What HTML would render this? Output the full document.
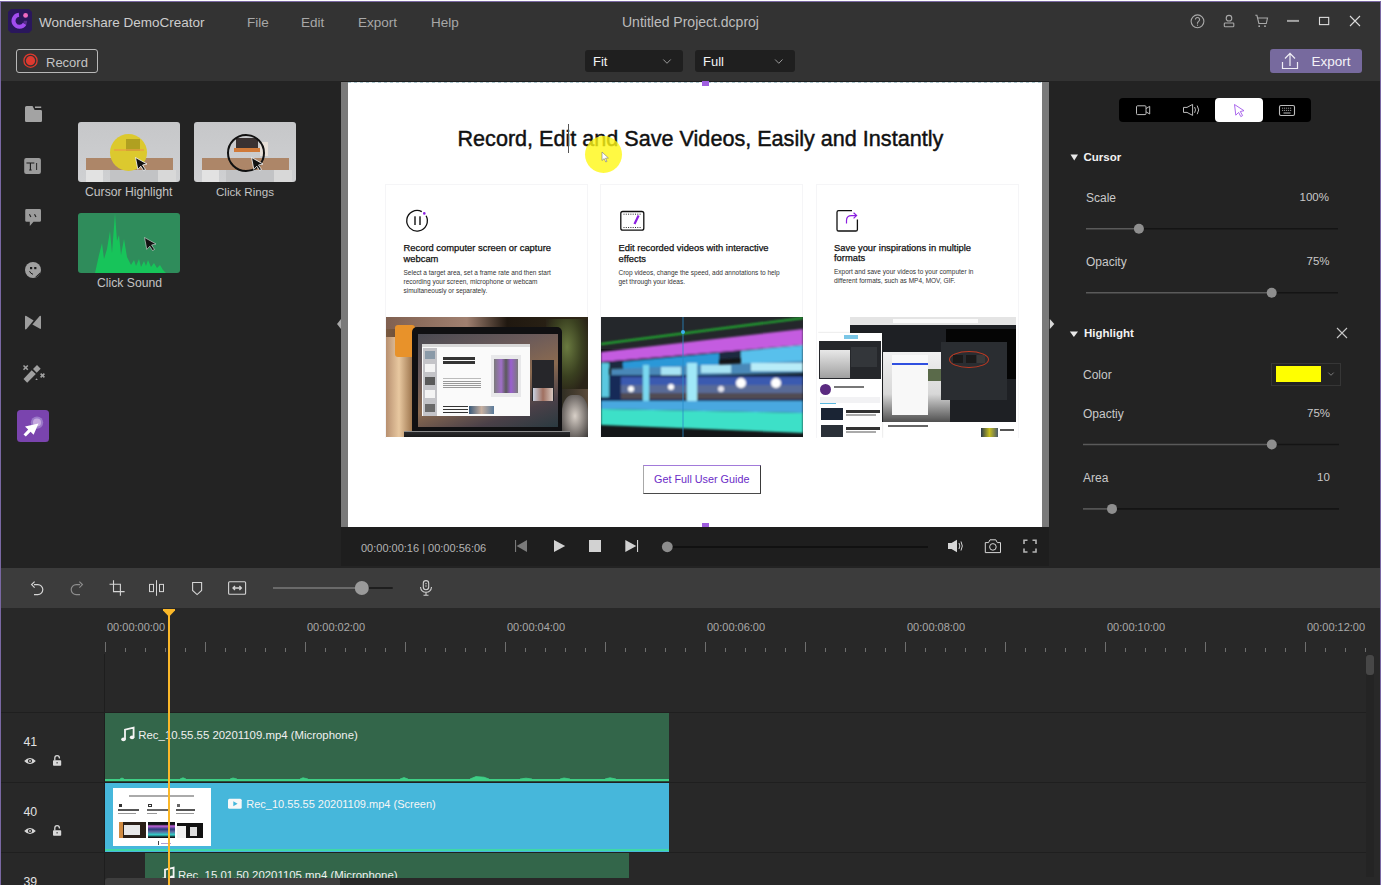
<!DOCTYPE html>
<html><head><meta charset="utf-8">
<style>
*{box-sizing:border-box;margin:0;padding:0}
html,body{width:1381px;height:885px;overflow:hidden;background:#fff;font-family:"Liberation Sans",sans-serif}
.a{position:absolute}
.t{position:absolute;white-space:pre;line-height:1}
svg{position:absolute;overflow:visible}
</style></head><body>
<!-- window frame -->
<div class="a" style="left:0;top:1px;width:1381px;height:884px;background:#7a68a3"></div>
<!-- title + toolbar -->
<div class="a" id="top" style="left:1px;top:2px;width:1379px;height:79px;background:#333333"></div>
<!-- TOPBAR CONTENT -->
<svg style="left:8px;top:9px" width="24" height="24" viewBox="0 0 24 24">
 <path d="M3 0 H21 L24 3 V21 L21 24 H3 L0 21 V3 Z" fill="#2a175c"/>
 <path d="M10.98 5.82 A6 6 0 1 0 16.7 14.8" fill="none" stroke="#a24cf0" stroke-width="4"/>
 <path d="M16.7 14.8 A6 6 0 0 0 17.5 11.8" fill="none" stroke="#5a2e90" stroke-width="3.4"/>
 <circle cx="17.6" cy="6.4" r="2.4" fill="#f06ac0"/>
</svg>
<div class="t" style="left:39px;top:15.6px;font-size:13.5px;color:#cdcdcd">Wondershare DemoCreator</div>
<div class="t" style="left:247px;top:15.6px;font-size:13.5px;color:#a8a8a8">File</div>
<div class="t" style="left:301px;top:15.6px;font-size:13.5px;color:#a8a8a8">Edit</div>
<div class="t" style="left:358px;top:15.6px;font-size:13.5px;color:#a8a8a8">Export</div>
<div class="t" style="left:431px;top:15.6px;font-size:13.5px;color:#a8a8a8">Help</div>
<div class="t" style="left:622px;top:15.4px;font-size:14px;color:#bdbdbd">Untitled Project.dcproj</div>
<svg style="left:1185px;top:8px" width="190" height="28" viewBox="1185 8 190 28">
 <circle cx="1197.5" cy="21.3" r="6.4" fill="none" stroke="#a9a9a9" stroke-width="1.1"/>
 <path d="M1195.4 19.6 a2.1 2.1 0 1 1 3.2 1.8 q-1.1 0.6 -1.1 1.7 v0.6" fill="none" stroke="#a9a9a9" stroke-width="1.1"/>
 <circle cx="1197.5" cy="25.2" r="0.6" fill="#a9a9a9"/>
 <circle cx="1229" cy="18.2" r="2.8" fill="none" stroke="#a9a9a9" stroke-width="1.1"/>
 <rect x="1224.3" y="23" width="9.5" height="3.8" rx="0.8" fill="none" stroke="#a9a9a9" stroke-width="1.1"/>
 <path d="M1255.3 15.3 h1.6 l2 8.2 h7.4 l1.2 -5.5 h-9.5" fill="none" stroke="#a9a9a9" stroke-width="1.1"/>
 <rect x="1258.4" y="25.4" width="1.6" height="1.6" fill="#a9a9a9"/>
 <rect x="1264.2" y="25.4" width="1.6" height="1.6" fill="#a9a9a9"/>
 <rect x="1287" y="19.9" width="12" height="2" fill="#a3a3a3"/>
 <rect x="1319.5" y="17.4" width="9.2" height="7.2" fill="none" stroke="#dcdcdc" stroke-width="1.1"/>
 <path d="M1350 16 L1360 26 M1360 16 L1350 26" stroke="#dcdcdc" stroke-width="1.1"/>
</svg>
<!-- record btn -->
<div class="a" style="left:16px;top:49px;width:82px;height:24px;border:1px solid #b8b8b8;border-radius:3px"></div>
<svg style="left:20px;top:50px" width="22" height="22" viewBox="20 50 22 22">
 <circle cx="30.5" cy="60.7" r="6.6" fill="none" stroke="#e0392d" stroke-width="1.3"/>
 <circle cx="30.5" cy="60.7" r="4.6" fill="#dd3a30"/>
</svg>
<div class="t" style="left:46px;top:55.8px;font-size:13px;color:#c4c4c4">Record</div>
<!-- dropdowns -->
<div class="a" style="left:585px;top:50px;width:98px;height:22px;background:#1f1f1f;border-radius:3px"></div>
<div class="t" style="left:593px;top:55px;font-size:13px;color:#f2f2f2">Fit</div>
<svg style="left:660px;top:55px" width="14" height="12" viewBox="660 55 14 12"><path d="M663.3 59.5 L667 63.3 L670.7 59.5" fill="none" stroke="#9a9a9a" stroke-width="1"/></svg>
<div class="a" style="left:695px;top:50px;width:100px;height:22px;background:#1f1f1f;border-radius:3px"></div>
<div class="t" style="left:703px;top:55px;font-size:13px;color:#f2f2f2">Full</div>
<svg style="left:772px;top:55px" width="14" height="12" viewBox="772 55 14 12"><path d="M775.1 59.5 L778.8 63.3 L782.5 59.5" fill="none" stroke="#9a9a9a" stroke-width="1"/></svg>
<!-- export btn -->
<div class="a" style="left:1270px;top:49px;width:92px;height:24px;background:#776a9e;border-radius:3px"></div>
<svg style="left:1278px;top:50px" width="24" height="22" viewBox="1278 50 24 22">
 <path d="M1282.5 62 V68.5 H1297.5 V62" fill="none" stroke="#f0eef5" stroke-width="1.2"/>
 <path d="M1290 53.5 V66 M1285 58.5 L1290 53.3 L1295 58.5" fill="none" stroke="#f0eef5" stroke-width="1.2"/>
</svg>
<div class="t" style="left:1311.5px;top:55.4px;font-size:13.5px;color:#f4f2f8">Export</div>
<!-- left panel -->
<div class="a" id="left" style="left:1px;top:81px;width:340px;height:487px;background:#232323"></div>
<!-- LEFT CONTENT -->
<svg style="left:1px;top:81px" width="340" height="487" viewBox="1 81 340 487">
 <!-- folder -->
 <path d="M26.5 106 H32.5 L34.6 110 H40.8 Q42 110 42 111.2 V120.8 Q42 122 40.8 122 H26.2 Q25 122 25 120.8 V107.5 Q25 106 26.5 106 Z" fill="#a3a3a3"/>
 <rect x="35" y="106.5" width="6.2" height="1.5" fill="#a3a3a3"/>
 <!-- TI -->
 <rect x="24.2" y="158" width="16.7" height="16" rx="2" fill="#9b9b9b"/>
 <path d="M27 163.5 V163 H33.8 V163.5 M30.4 163 V170 M29.2 170 H31.6" fill="none" stroke="#1a1a1a" stroke-width="1.1"/>
 <rect x="36.2" y="163" width="0.9" height="7" fill="#1a1a1a"/>
 <!-- chat -->
 <path d="M26.5 209 H39.6 Q41 209 41 210.4 V220.4 Q41 221.8 39.6 221.8 H33.5 L29.8 226 V221.8 H26.6 Q25.2 221.8 25.2 220.4 V210.4 Q25.2 209 26.5 209 Z" fill="#9b9b9b"/>
 <path d="M29.4 214.2 L30.9 217 M34.5 214.2 L36 217" stroke="#1e1e1e" stroke-width="1.1"/>
 <!-- emoji -->
 <circle cx="33" cy="270" r="8" fill="#a0a0a0"/>
 <path d="M34.8 277.6 L40.6 272 Q39.6 276.4 34.8 277.6 Z" fill="#1a1a1a"/>
 <rect x="30" y="267" width="2.2" height="2.2" fill="#1a1a1a"/>
 <rect x="34.2" y="267" width="2.2" height="2.2" fill="#1a1a1a"/>
 <path d="M29.5 271.2 Q30.5 273.6 33 274.3" fill="none" stroke="#1a1a1a" stroke-width="1"/>
 <!-- transitions -->
 <path d="M25 316.5 Q25 315.3 26.3 315.9 L33.6 320.5 L26.5 329 Q25 330 25 328.5 Z" fill="#9d9d9d"/>
 <path d="M41 316.5 Q41 315.3 39.7 316 L32.4 324.4 L39.5 328.6 Q41 329.4 41 328 Z" fill="#9d9d9d"/>
 <!-- magic wand -->
 <path d="M23.5 379 L31.7 370.3 L35.8 374 L27.2 382.8 Z" fill="#a0a0a0"/>
 <path d="M33 369 L37 365 L40.7 368.8 L36.7 372.8 Z" fill="#a0a0a0"/>
 <path d="M23.5 365.5 L27.8 369.7 M27.8 365.5 L23.5 369.7" stroke="#a0a0a0" stroke-width="1.6"/>
 <path d="M40.6 373.6 L44.4 377.4 M44.4 373.6 L40.6 377.4" stroke="#a0a0a0" stroke-width="1.6"/>
 <path d="M35.3 380 L36.5 378.2 L37.8 380 Z" fill="#a0a0a0"/>
 <!-- cursor tool active -->
 <rect x="17" y="410" width="32" height="32" rx="3.5" fill="#7a44ae"/>
 <circle cx="37" cy="422.6" r="6.2" fill="#9a78c8"/>
 <circle cx="37" cy="422.6" r="4" fill="#c5a8df"/>
 <path d="M38.5 423.5 L25 426.5 L28.2 429.6 L23.5 434.5 L25.8 436.6 L30.6 431.8 L33.6 434.8 Z" fill="#ffffff"/>
</svg>
<!-- thumbs -->
<div class="a" style="left:78px;top:122px;width:102px;height:60px;border-radius:3px;overflow:hidden;background:linear-gradient(#c6c7c9,#cfd0d2)">
 <div class="a" style="left:8px;top:36px;width:87px;height:12px;background:#ad8668"></div>
 <div class="a" style="left:8px;top:48px;width:17px;height:12px;background:#e2e2e2"></div>
 <div class="a" style="left:80px;top:48px;width:18px;height:12px;background:#d8d8d8"></div>
 <div class="a" style="left:32px;top:48px;width:48px;height:12px;background:#c2c3c5"></div>
 <div class="a" style="left:32px;top:12px;width:37px;height:37px;border-radius:50%;background:#dcc92e"></div>
 <div class="a" style="left:48px;top:17px;width:14px;height:12px;background:#b0a020"></div>
 <div class="a" style="left:36px;top:27px;width:30px;height:2px;background:#e8a040;opacity:.7"></div>
 <svg style="left:57px;top:35px" width="14" height="14" viewBox="0 0 14 14"><path d="M0.5 0.5 L12 7 L7.5 8 L10.5 12.5 L8.5 13.5 L5.8 9.2 L2.8 12.4 Z" fill="#111" stroke="#fff" stroke-width="0.8"/></svg>
</div>
<div class="t" style="left:85px;top:185.5px;font-size:12.2px;color:#c4c4c4">Cursor Highlight</div>
<div class="a" style="left:194px;top:122px;width:102px;height:60px;border-radius:3px;overflow:hidden;background:linear-gradient(#c6c7c9,#cfd0d2)">
 <div class="a" style="left:8px;top:36px;width:87px;height:12px;background:#ad8668"></div>
 <div class="a" style="left:8px;top:48px;width:17px;height:12px;background:#e2e2e2"></div>
 <div class="a" style="left:80px;top:48px;width:18px;height:12px;background:#d8d8d8"></div>
 <div class="a" style="left:32px;top:48px;width:48px;height:12px;background:#c2c3c5"></div>
 <div class="a" style="left:42px;top:16px;width:22px;height:12px;background:#3a3232"></div>
 <div class="a" style="left:40px;top:26px;width:30px;height:4px;background:#d07a3a"></div>
 <div class="a" style="left:66px;top:20px;width:8px;height:14px;background:#e8e0d8"></div>
 <div class="a" style="left:33px;top:12px;width:38px;height:38px;border-radius:50%;border:2px solid #111"></div>
 <svg style="left:57px;top:35px" width="14" height="14" viewBox="0 0 14 14"><path d="M0.5 0.5 L12 7 L7.5 8 L10.5 12.5 L8.5 13.5 L5.8 9.2 L2.8 12.4 Z" fill="#111" stroke="#fff" stroke-width="0.8"/></svg>
</div>
<div class="t" style="left:216px;top:185.8px;font-size:11.6px;color:#c4c4c4">Click Rings</div>
<div class="a" style="left:78px;top:213px;width:102px;height:60px;border-radius:3px;overflow:hidden;background:#2f8c5b">
 <svg style="left:0;top:0" width="102" height="60" viewBox="0 0 102 60"><path d="M17 60 L21 42 L24 30 L26 46 L29 36 L32 18 L34 40 L37 0 L39 28 L41 22 L43 42 L46 26 L49 44 L53 52 L56 47 L58 53 L61 46 L63 54 L66 48 L68 53 L70 47 L73 54 L76 50 L79 55 L82 52 L85 57 L88 60 Z" fill="#17c45a"/></svg>
 <svg style="left:66px;top:24px" width="14" height="14" viewBox="0 0 14 14"><path d="M0.5 0.5 L12 7 L7.5 8 L10.5 12.5 L8.5 13.5 L5.8 9.2 L2.8 12.4 Z" fill="#111" stroke="#ddd" stroke-width="0.6"/></svg>
</div>
<div class="t" style="left:97px;top:276.5px;font-size:12.2px;color:#c4c4c4">Click Sound</div>
<!-- right panel -->
<div class="a" id="right" style="left:1049px;top:81px;width:331px;height:487px;background:#232323"></div>
<!-- RIGHT CONTENT -->
<div class="a" style="left:1119px;top:98px;width:192px;height:24px;background:#000;border-radius:4px"></div>
<div class="a" style="left:1215px;top:98px;width:48px;height:24px;background:#fff;border-radius:4px"></div>
<svg style="left:1119px;top:98px" width="192" height="24" viewBox="1119 98 192 24">
 <rect x="1136.5" y="105.8" width="9.5" height="8.8" rx="1" fill="none" stroke="#bdbdbd" stroke-width="1"/>
 <path d="M1146 108.6 L1149.7 106.3 V114 L1146 111.8" fill="none" stroke="#bdbdbd" stroke-width="1"/>
 <path d="M1183.5 107.4 H1187 L1192.6 104.4 V115.4 L1187 112.4 H1183.5 Z" fill="none" stroke="#bdbdbd" stroke-width="1"/>
 <path d="M1194.6 107 Q1196.4 109.9 1194.6 112.8 M1197.2 105.6 Q1200.2 109.9 1197.2 114.2" fill="none" stroke="#bdbdbd" stroke-width="1"/>
 <path d="M1234.5 104.5 L1244 110.7 L1240.3 111.5 L1242.6 115.6 L1240.8 116.6 L1238.6 112.4 L1235.8 115.2 Z" fill="none" stroke="#a158ea" stroke-width="0.9"/>
 <rect x="1279.5" y="105.5" width="15" height="10" rx="1.5" fill="none" stroke="#bdbdbd" stroke-width="1.1"/>
 <path d="M1282 108.2 H1292 M1282 110.4 H1292" stroke="#bdbdbd" stroke-width="0.8" stroke-dasharray="1.2 0.8"/>
 <path d="M1283.5 113 H1290.5" stroke="#bdbdbd" stroke-width="1"/>
</svg>
<svg style="left:1060px;top:140px" width="300" height="400" viewBox="1060 140 300 400">
 <path d="M1070.5 154.6 H1078 L1074.25 160.6 Z" fill="#e8e8e8"/>
 <path d="M1086 228.8 H1138" stroke="#5a5a5a" stroke-width="1.6"/>
 <path d="M1139 228.8 H1338" stroke="#141414" stroke-width="1.6"/>
 <circle cx="1138.9" cy="228.8" r="5" fill="#8e8e8e"/>
 <path d="M1086 292.8 H1271" stroke="#5a5a5a" stroke-width="1.6"/>
 <path d="M1272 292.8 H1338" stroke="#141414" stroke-width="1.6"/>
 <circle cx="1271.7" cy="292.8" r="5" fill="#8e8e8e"/>
 <path d="M1069.8 331.4 H1078 L1073.9 337 Z" fill="#e8e8e8"/>
 <path d="M1337 328 L1347 338 M1347 328 L1337 338" stroke="#c8c8c8" stroke-width="1.1"/>
 <path d="M1083 444.5 H1271" stroke="#5a5a5a" stroke-width="1.6"/>
 <path d="M1272 444.5 H1339" stroke="#141414" stroke-width="1.6"/>
 <circle cx="1271.8" cy="444.5" r="5" fill="#8e8e8e"/>
 <path d="M1083 508.9 H1111" stroke="#5a5a5a" stroke-width="1.6"/>
 <path d="M1112 508.9 H1339" stroke="#141414" stroke-width="1.6"/>
 <circle cx="1112" cy="508.9" r="5" fill="#8e8e8e"/>
</svg>
<div class="t" style="left:1083.5px;top:151.6px;font-size:11.5px;font-weight:700;color:#f2f2f2">Cursor</div>
<div class="t" style="left:1086px;top:192.3px;font-size:12px;color:#c9c9c9">Scale</div>
<div class="t" style="left:1299.5px;top:192.3px;font-size:11.5px;color:#c9c9c9">100%</div>
<div class="t" style="left:1086px;top:256.3px;font-size:12px;color:#c9c9c9">Opacity</div>
<div class="t" style="left:1306.5px;top:256.3px;font-size:11.5px;color:#c9c9c9">75%</div>
<div class="t" style="left:1084px;top:328.3px;font-size:11.5px;font-weight:700;color:#f2f2f2">Highlight</div>
<div class="t" style="left:1083px;top:369.4px;font-size:12px;color:#c9c9c9">Color</div>
<div class="a" style="left:1271px;top:362.5px;width:69.5px;height:23px;border:1px solid #363636;background:#232323"></div>
<div class="a" style="left:1275.7px;top:365.8px;width:45.3px;height:16px;background:#ffff00"></div>
<svg style="left:1325px;top:370px" width="12" height="8" viewBox="1325 370 12 8"><path d="M1328.3 372.6 L1331 375.3 L1333.7 372.6" fill="none" stroke="#7a7a7a" stroke-width="1"/></svg>
<div class="t" style="left:1083px;top:408.1px;font-size:12px;color:#c9c9c9">Opactiy</div>
<div class="t" style="left:1307px;top:408.1px;font-size:11.5px;color:#c9c9c9">75%</div>
<div class="t" style="left:1083px;top:472.2px;font-size:12px;color:#c9c9c9">Area</div>
<div class="t" style="left:1317px;top:472.2px;font-size:11.5px;color:#c9c9c9">10</div>
<!-- preview -->
<div class="a" id="prev" style="left:341px;top:81px;width:708px;height:446px;background:#7a7a7a"></div>
<div class="a" style="left:348px;top:83px;width:694px;height:444px;background:#ffffff"></div>
<!-- PREVIEW CONTENT -->
<div class="a" style="left:341px;top:81px;width:708px;height:1px;background:#1c1c1c"></div>
<div class="a" style="left:348px;top:82px;width:694px;height:1px;background:repeating-linear-gradient(90deg,#aac4cc 0 3px,#e8eef0 3px 6px)"></div>
<div class="a" style="left:702px;top:81px;width:7px;height:5px;background:#a05ee0"></div>
<div class="a" style="left:702px;top:523px;width:7px;height:4px;background:#a05ee0"></div>
<div class="t" style="left:457.5px;top:128.3px;font-size:21.6px;color:#111;-webkit-text-stroke:0.45px #111">Record, Edit and Save Videos, Easily and Instantly</div>
<div class="a" style="left:568px;top:124px;width:1px;height:29px;background:#555"></div>
<div class="a" style="left:585px;top:135.5px;width:37px;height:37px;border-radius:50%;background:rgba(255,248,20,0.8)"></div>
<svg style="left:601px;top:151px" width="10" height="12" viewBox="0 0 10 12"><path d="M1 1 L1 9.5 L3.2 7.6 L4.8 11 L6 10.4 L4.5 7.2 L7.4 7 Z" fill="#fff" stroke="#777" stroke-width="0.6"/></svg>
<!-- cards -->
<div class="a" style="left:385px;top:184px;width:203px;height:254px;border:1px solid #f5f5f7;border-bottom:none"></div>
<div class="a" style="left:600px;top:184px;width:203px;height:254px;border:1px solid #f5f5f7;border-bottom:none"></div>
<div class="a" style="left:816px;top:184px;width:203px;height:254px;border:1px solid #f5f5f7;border-bottom:none"></div>
<svg style="left:400px;top:205px" width="40" height="30" viewBox="400 205 40 30">
 <path d="M421.8 211.6 A10.3 10.3 0 1 0 426.1 215.8" fill="none" stroke="#111" stroke-width="1.3"/>
 <circle cx="424.3" cy="213.4" r="1.3" fill="#8a1ee0"/>
 <rect x="414.3" y="216.3" width="1.4" height="8.7" fill="#111"/>
 <rect x="419.3" y="216.3" width="1.4" height="8.7" fill="#111"/>
</svg>
<svg style="left:615px;top:205px" width="40" height="30" viewBox="615 205 40 30">
 <rect x="620.8" y="211.5" width="23" height="18.7" rx="2" fill="none" stroke="#111" stroke-width="1.3"/>
 <path d="M623.5 214.2 H641 M623.5 227.5 H641" stroke="#111" stroke-width="0.9" stroke-dasharray="1 1.3"/>
 <path d="M634.5 224 L638.6 215.5" stroke="#8a1ee0" stroke-width="2.2"/>
</svg>
<svg style="left:830px;top:205px" width="40" height="30" viewBox="830 205 40 30">
 <path d="M852 210.6 H838.6 Q837 210.6 837 212.2 V229.4 Q837 231 838.6 231 H855.8 Q857.4 231 857.4 229.4 V219.5" fill="none" stroke="#111" stroke-width="1.3"/>
 <path d="M846.5 223.5 V220.5 Q846.5 215.6 851.5 215.6 H856.5 M853.6 212.8 L856.6 215.6 L853.6 218.4" fill="none" stroke="#8a1ee0" stroke-width="1.2"/>
</svg>
<div class="t" style="left:403.5px;top:243px;font-size:9.4px;color:#111;-webkit-text-stroke:0.25px #111;line-height:10.5px">Record computer screen or capture
webcam</div>
<div class="t" style="left:403.5px;top:267.5px;font-size:6.5px;color:#333;line-height:9.3px">Select a target area, set a frame rate and then start
recording your screen, microphone or webcam
simultaneously or separately.</div>
<div class="t" style="left:618.5px;top:243.3px;font-size:9.4px;color:#111;-webkit-text-stroke:0.25px #111;line-height:10.5px">Edit recorded videos with interactive
effects</div>
<div class="t" style="left:618.5px;top:267.5px;font-size:6.5px;color:#333;line-height:9.3px">Crop videos, change the speed, add annotations to help
get through your ideas.</div>
<div class="t" style="left:834px;top:242.5px;font-size:9.4px;color:#111;-webkit-text-stroke:0.25px #111;line-height:10.5px">Save your inspirations in multiple
formats</div>
<div class="t" style="left:834px;top:267.2px;font-size:6.5px;color:#333;line-height:9.3px">Export and save your videos to your computer in
different formats, such as MP4, MOV, GIF.</div>
<!-- image 1 laptop -->
<div class="a" style="left:386px;top:317px;width:202px;height:120px;overflow:hidden;background:linear-gradient(90deg,#7a5a40 0%,#4a3428 20%,#3a2c24 60%,#2a2a20 85%,#5a4a3a 100%)">
 <div class="a" style="left:0;top:0;width:202px;height:12px;background:linear-gradient(90deg,#806050,#a08070 40%,#201810 60%,#302818)"></div>
 <div class="a" style="left:0;top:20px;width:26px;height:100px;background:linear-gradient(90deg,#b89070,#e8c8a0 50%,#a07850)"></div>
 <div class="a" style="left:9px;top:8px;width:20px;height:32px;background:#e8922a;border-radius:3px"></div>
 <div class="a" style="left:160px;top:2px;width:42px;height:70px;background:radial-gradient(ellipse at 50% 40%,#6a7a40,#3a4020 50%,#2a2418 80%)"></div>
 <div class="a" style="left:176px;top:78px;width:26px;height:42px;border-radius:40% 40% 0 0;background:radial-gradient(ellipse at 50% 50%,#d8d0c8,#7a7470 60%,#3a3836)"></div>
 <div class="a" style="left:26px;top:10px;width:150px;height:105px;border-radius:5px 5px 0 0;background:#101012"></div>
 <div class="a" style="left:32px;top:17px;width:140px;height:93px;background:linear-gradient(160deg,#4a4a52 0%,#6a5a5a 30%,#8a6a50 55%,#4a4048 80%,#2a3a40 100%)"></div>
 <div class="a" style="left:36px;top:27px;width:108px;height:72px;background:#fafafa"></div>
 <div class="a" style="left:36px;top:27px;width:108px;height:3px;background:#d8d8d8"></div>
 <div class="a" style="left:37px;top:31px;width:14px;height:68px;background:#c4c4c8"></div>
 <div class="a" style="left:39px;top:34px;width:10px;height:8px;background:#8a9aa8"></div>
 <div class="a" style="left:39px;top:47px;width:10px;height:8px;background:#f4f4f4"></div>
 <div class="a" style="left:39px;top:60px;width:10px;height:8px;background:#5a5a5a"></div>
 <div class="a" style="left:39px;top:73px;width:10px;height:8px;background:#f4f4f4"></div>
 <div class="a" style="left:39px;top:87px;width:10px;height:8px;background:#6a6a6a"></div>
 <div class="a" style="left:57px;top:40px;width:32px;height:2.5px;background:#333"></div>
 <div class="a" style="left:57px;top:44px;width:32px;height:2.5px;background:#333"></div>
 <div class="a" style="left:57px;top:61px;width:38px;height:1px;background:#bbb"></div>
 <div class="a" style="left:57px;top:64px;width:38px;height:8px;background:repeating-linear-gradient(#999 0 1px,#fafafa 1px 2px)"></div>
 <div class="a" style="left:57px;top:89px;width:25px;height:7px;background:repeating-linear-gradient(#333 0 1.5px,#fafafa 1.5px 3px)"></div>
 <div class="a" style="left:105px;top:38px;width:30px;height:42px;background:#e8e8ea"></div>
 <div class="a" style="left:108px;top:42px;width:24px;height:34px;background:linear-gradient(90deg,#7a7a7a,#a070c8 30%,#5a5a5a 50%,#9a60d0 70%,#7a7a7a)"></div>
 <div class="a" style="left:83px;top:89px;width:25px;height:8px;background:linear-gradient(90deg,#3a5a7a,#c8b0a0,#5a7a9a)"></div>
 <div class="a" style="left:146px;top:43px;width:22px;height:41px;background:#26262a"></div>
 <div class="a" style="left:147px;top:71px;width:20px;height:13px;background:linear-gradient(90deg,#c8d0e0,#a07060 50%,#d8c8c0)"></div>
 <div class="a" style="left:18px;top:114px;width:166px;height:6px;background:linear-gradient(#2a2a2c,#1a1a1a);border-top:1px solid #8a8a8a"></div>
</div>
<!-- image 2 timeline -->
<div class="a" style="left:601px;top:317px;width:202px;height:120px;overflow:hidden;background:#141618">
 <svg style="left:0;top:0" width="202" height="120" viewBox="0 0 202 120">
  <defs><filter id="bl" x="-5%" y="-5%" width="110%" height="110%"><feGaussianBlur stdDeviation="1.2"/></filter></defs>
  <rect width="202" height="32" fill="#24272b"/>
  <g filter="url(#bl)">
  <path d="M0 27 L202 1" stroke="#20b830" stroke-width="1.8"/>
  <path d="M0 35 L202 12 L202 28 L0 45 Z" fill="#c45ce0"/>
  <path d="M0 45 L202 28 L202 36 L0 52 Z" fill="#1a2a40"/>
  <path d="M22 45 L118 36 L118 50 L22 56 Z" fill="#2a98d8"/>
  <path d="M140 34 L202 28 L202 46 L140 50 Z" fill="#58c0ec"/>
  <path d="M10 52 L202 44 L202 56 L10 60 Z" fill="#4a88b8"/><rect x="60" y="50" width="20" height="8" fill="#a8e4f4"/><rect x="100" y="48" width="30" height="8" fill="#a8e4f4"/><rect x="150" y="46" width="52" height="8" fill="#b8ecf8"/>
  <rect x="0" y="58" width="202" height="26" fill="#182a58"/>
  <rect x="20" y="60" width="182" height="8" fill="#3a5ab0"/>
  <rect x="20" y="68" width="182" height="8" fill="#6a7aa8" opacity="0.8"/><circle cx="30" cy="72" r="3" fill="#fff"/><circle cx="70" cy="70" r="3" fill="#fff"/><circle cx="140" cy="66" r="5" fill="#fff"/><circle cx="175" cy="66" r="5" fill="#fff"/><circle cx="120" cy="72" r="3" fill="#e8e8f0"/>
  <rect x="20" y="76" width="182" height="6" fill="#6a5a50" opacity="0.7"/>
  <rect x="0" y="46" width="8" height="34" fill="#5ac8e0"/>
  <rect x="42" y="48" width="6" height="36" fill="#7ad8f0"/>
  <rect x="86" y="46" width="10" height="38" fill="#a0e8f8"/>
  
  <path d="M0 84 L202 84 L202 96 L0 92 Z" fill="#4aa8e0"/>
  <path d="M0 92 L202 96 L202 116 L0 108 Z" fill="#3ee0c8"/>
  </g>
  <path d="M82 0 V120" stroke="#2a8ac8" stroke-width="0.8"/>
  <circle cx="82" cy="15" r="2" fill="#3ab0f0"/>
 </svg>
</div>
<!-- image 3 screenshot -->
<div class="a" style="left:818px;top:317px;width:199px;height:121px;overflow:hidden;background:#ffffff">
 <div class="a" style="left:32px;top:0;width:166px;height:8px;background:#e4e4e4"></div>
 <div class="a" style="left:75px;top:2px;width:85px;height:4px;background:#fafafa"></div>
 <div class="a" style="left:32px;top:8px;width:166px;height:97px;background:#1e2024"></div>
 <div class="a" style="left:65px;top:35px;width:67px;height:70px;background:linear-gradient(#f0f0f0,#d8d8d8 60%,#505050)"></div>
 <div class="a" style="left:74px;top:38px;width:36px;height:60px;background:#f8f8f8"></div>
 <div class="a" style="left:74px;top:46px;width:36px;height:1.5px;background:#3050e0"></div>
 <div class="a" style="left:110px;top:52px;width:14px;height:12px;background:#5a6a4a"></div>
 <div class="a" style="left:128px;top:12px;width:70px;height:50px;background:#050505"></div>
 <div class="a" style="left:123px;top:25px;width:66px;height:58px;background:#2a2d31"></div>
 <div class="a" style="left:131px;top:34px;width:40px;height:17px;border:1px solid #c03a22;border-radius:50%"></div><div class="a" style="left:135px;top:38px;width:10px;height:8px;background:#1a1a1a"></div><div class="a" style="left:148px;top:38px;width:10px;height:8px;background:#1a1a1a"></div><div class="a" style="left:159px;top:38px;width:8px;height:8px;background:#3a3a3a"></div>
 <div class="a" style="left:0px;top:16px;width:64px;height:105px;background:#fff;box-shadow:0 0 2px rgba(0,0,0,0.2)"></div>
 <div class="a" style="left:26px;top:18px;width:14px;height:4px;background:#5ab8e0;opacity:.8"></div>
 <div class="a" style="left:1px;top:24px;width:62px;height:38px;background:#25272b"></div>
 <div class="a" style="left:2px;top:33px;width:30px;height:28px;background:linear-gradient(#e8e8e8,#a0a0a0)"></div>
 <div class="a" style="left:33px;top:30px;width:26px;height:20px;background:#33363a"></div>
 <div class="a" style="left:2px;top:67px;width:11px;height:11px;border-radius:50%;background:#5a2a80"></div>
 <div class="a" style="left:16px;top:69px;width:30px;height:2px;background:#777"></div>
 <div class="a" style="left:2px;top:80px;width:60px;height:6px;background:#f2f2f4"></div>
 <div class="a" style="left:2px;top:86px;width:16px;height:1px;background:#5ab8e0"></div>
 <div class="a" style="left:3px;top:91px;width:22px;height:12px;background:#1a2434"></div>
 <div class="a" style="left:3px;top:108px;width:22px;height:12px;background:#2a3038"></div>
 <div class="a" style="left:28px;top:93px;width:34px;height:2.5px;background:#333"></div>
 <div class="a" style="left:28px;top:97px;width:30px;height:1.5px;background:#aaa"></div>
 <div class="a" style="left:28px;top:110px;width:34px;height:2.5px;background:#333"></div>
 <div class="a" style="left:28px;top:114px;width:30px;height:1.5px;background:#aaa"></div>
 <div class="a" style="left:70px;top:108px;width:40px;height:1.5px;background:#666"></div>
 <div class="a" style="left:163px;top:111px;width:17px;height:9px;background:linear-gradient(90deg,#2a3a4a,#c8c020 50%,#4a5a6a)"></div><div class="a" style="left:182px;top:112px;width:14px;height:2px;background:#555"></div>
</div>
<!-- guide button -->
<div class="a" style="left:642.5px;top:464.5px;width:118px;height:29px;border:1px solid #a8a8a8;border-top-color:#a27ada;border-right-color:#3a3a3a;border-bottom-color:#4a4a4a"></div>
<div class="t" style="left:654px;top:474px;font-size:10.8px;color:#6b2bc7">Get Full User Guide</div>
<div class="a" id="ctrl" style="left:341px;top:527px;width:708px;height:39px;background:#1e1e1e"></div>
<div class="a" style="left:341px;top:566px;width:708px;height:2px;background:#232323"></div>
<!-- CONTROLS CONTENT -->
<div class="t" style="left:361px;top:543.2px;font-size:11px;color:#b4b4b4">00:00:00:16 | 00:00:56:06</div>
<svg style="left:500px;top:530px" width="560" height="36" viewBox="500 530 560 36">
 <rect x="515" y="540" width="1.1" height="12" fill="#7a7a7a"/>
 <path d="M527 540 V552 L516.6 546 Z" fill="#7a7a7a"/>
 <path d="M554 540 V552 L565.2 546 Z" fill="#d2d2d2"/>
 <rect x="589" y="540" width="12" height="12" fill="#d2d2d2"/>
 <path d="M625.3 540 V552 L636.3 546 Z" fill="#d2d2d2"/>
 <rect x="637" y="540" width="1.1" height="12" fill="#d2d2d2"/>
 <path d="M668 547 H928" stroke="#0e0e0e" stroke-width="1.3"/>
 <circle cx="667.3" cy="546.8" r="5.4" fill="#8c8c8c"/>
 <path d="M948 543 H951.5 L957 539.8 V552.2 L951.5 549 H948 Z" fill="#d6d6d6"/>
 <path d="M959 543 Q960.6 546 959 549 M961 541.5 Q963.6 546 961 550.5" fill="none" stroke="#d6d6d6" stroke-width="1"/>
 <path d="M985.3 542.6 H988.5 L990 539.8 H995.8 L997.3 542.6 H1000.5 V552.6 H985.3 Z" fill="none" stroke="#d6d6d6" stroke-width="1"/>
 <circle cx="992.9" cy="546.9" r="3.3" fill="none" stroke="#d6d6d6" stroke-width="1"/>
 <path d="M1024 544 V540.3 H1027.5 M1032.5 540.3 H1036 V544 M1036 548.5 V552 H1032.5 M1027.5 552 H1024 V548.5" fill="none" stroke="#b4b4b4" stroke-width="1.6"/>
</svg>
<svg style="left:335px;top:316px" width="8" height="16" viewBox="335 316 8 16"><path d="M341 319 L337 324 L341 329 Z" fill="#a8a8a8"/></svg>
<svg style="left:1047px;top:316px" width="10" height="16" viewBox="1047 316 10 16"><path d="M1049.8 319 L1054.3 324 L1049.8 329 Z" fill="#d8d8d8"/></svg>
<!-- timeline toolbar -->
<div class="a" id="ttool" style="left:1px;top:568px;width:1379px;height:40px;background:#3c3c3c"></div>
<!-- timeline -->
<div class="a" id="tl" style="left:1px;top:608px;width:1379px;height:277px;background:#282828"></div>
<!-- TIMELINE CONTENT -->
<svg style="left:1px;top:568px" width="460" height="40" viewBox="1 568 460 40">
 <path d="M34 584.6 H37.8 A5 5 0 0 1 37.8 594.6 H34" fill="none" stroke="#d4d4d4" stroke-width="1.2"/>
 <path d="M34.6 581.6 L31.6 584.6 L34.6 587.6" fill="none" stroke="#d4d4d4" stroke-width="1.2"/>
 <path d="M80 584.6 H76.2 A5 5 0 0 0 76.2 594.6 H80" fill="none" stroke="#8c8c8c" stroke-width="1.2"/>
 <path d="M79.4 581.6 L82.4 584.6 L79.4 587.6" fill="none" stroke="#8c8c8c" stroke-width="1.2"/>
 <path d="M109.5 584.3 H120.4 V595.8 M113.5 580.2 V591.6 H124.6" fill="none" stroke="#d4d4d4" stroke-width="1.1"/>
 <rect x="149.5" y="584.4" width="4" height="7.2" fill="none" stroke="#d4d4d4" stroke-width="1"/>
 <rect x="159.5" y="584.4" width="4" height="7.2" fill="none" stroke="#d4d4d4" stroke-width="1"/>
 <path d="M156.5 580.2 V595.8" stroke="#d4d4d4" stroke-width="1"/>
 <path d="M192.6 582.5 H201.6 V590.5 L197.1 594.6 L192.6 590.5 Z" fill="none" stroke="#d4d4d4" stroke-width="1.1"/>
 <rect x="228.6" y="581.7" width="17" height="12.6" rx="1" fill="none" stroke="#d4d4d4" stroke-width="1.1"/>
 <path d="M233 588 H241.4 M235 586 L233 588 L235 590 M239.4 586 L241.4 588 L239.4 590" fill="none" stroke="#d4d4d4" stroke-width="1.3"/>
 <path d="M273 588 H362" stroke="#6a6a6a" stroke-width="2"/>
 <path d="M362 588 H392.7" stroke="#1e1e1e" stroke-width="2"/>
 <circle cx="361.8" cy="588" r="7" fill="#9a9a9a"/>
 <rect x="423.3" y="580.6" width="5.4" height="9.2" rx="2.7" fill="none" stroke="#cfcfcf" stroke-width="1.1"/>
 <path d="M420.5 587 Q421 592.3 426 592.3 Q431 592.3 431.5 587 M426 592.3 V595 M423.5 595.3 H428.5" fill="none" stroke="#cfcfcf" stroke-width="1.1"/>
 <rect x="425.4" y="583" width="1.2" height="1.2" fill="#cfcfcf"/><rect x="425.4" y="585.4" width="1.2" height="1.2" fill="#cfcfcf"/>
</svg>
<svg style="left:1px;top:608px" width="1380" height="277" viewBox="1 608 1380 277">
 <rect x="105" y="642" width="1" height="10" fill="#6e6e6e"/><rect x="125" y="648" width="1" height="4" fill="#6e6e6e"/><rect x="145" y="648" width="1" height="4" fill="#6e6e6e"/><rect x="165" y="648" width="1" height="4" fill="#6e6e6e"/><rect x="185" y="648" width="1" height="4" fill="#6e6e6e"/><rect x="205" y="642" width="1" height="10" fill="#6e6e6e"/><rect x="225" y="648" width="1" height="4" fill="#6e6e6e"/><rect x="245" y="648" width="1" height="4" fill="#6e6e6e"/><rect x="265" y="648" width="1" height="4" fill="#6e6e6e"/><rect x="285" y="648" width="1" height="4" fill="#6e6e6e"/><rect x="305" y="642" width="1" height="10" fill="#6e6e6e"/><rect x="325" y="648" width="1" height="4" fill="#6e6e6e"/><rect x="345" y="648" width="1" height="4" fill="#6e6e6e"/><rect x="365" y="648" width="1" height="4" fill="#6e6e6e"/><rect x="385" y="648" width="1" height="4" fill="#6e6e6e"/><rect x="405" y="642" width="1" height="10" fill="#6e6e6e"/><rect x="425" y="648" width="1" height="4" fill="#6e6e6e"/><rect x="445" y="648" width="1" height="4" fill="#6e6e6e"/><rect x="465" y="648" width="1" height="4" fill="#6e6e6e"/><rect x="485" y="648" width="1" height="4" fill="#6e6e6e"/><rect x="505" y="642" width="1" height="10" fill="#6e6e6e"/><rect x="525" y="648" width="1" height="4" fill="#6e6e6e"/><rect x="545" y="648" width="1" height="4" fill="#6e6e6e"/><rect x="565" y="648" width="1" height="4" fill="#6e6e6e"/><rect x="585" y="648" width="1" height="4" fill="#6e6e6e"/><rect x="605" y="642" width="1" height="10" fill="#6e6e6e"/><rect x="625" y="648" width="1" height="4" fill="#6e6e6e"/><rect x="645" y="648" width="1" height="4" fill="#6e6e6e"/><rect x="665" y="648" width="1" height="4" fill="#6e6e6e"/><rect x="685" y="648" width="1" height="4" fill="#6e6e6e"/><rect x="705" y="642" width="1" height="10" fill="#6e6e6e"/><rect x="725" y="648" width="1" height="4" fill="#6e6e6e"/><rect x="745" y="648" width="1" height="4" fill="#6e6e6e"/><rect x="765" y="648" width="1" height="4" fill="#6e6e6e"/><rect x="785" y="648" width="1" height="4" fill="#6e6e6e"/><rect x="805" y="642" width="1" height="10" fill="#6e6e6e"/><rect x="825" y="648" width="1" height="4" fill="#6e6e6e"/><rect x="845" y="648" width="1" height="4" fill="#6e6e6e"/><rect x="865" y="648" width="1" height="4" fill="#6e6e6e"/><rect x="885" y="648" width="1" height="4" fill="#6e6e6e"/><rect x="905" y="642" width="1" height="10" fill="#6e6e6e"/><rect x="925" y="648" width="1" height="4" fill="#6e6e6e"/><rect x="945" y="648" width="1" height="4" fill="#6e6e6e"/><rect x="965" y="648" width="1" height="4" fill="#6e6e6e"/><rect x="985" y="648" width="1" height="4" fill="#6e6e6e"/><rect x="1005" y="642" width="1" height="10" fill="#6e6e6e"/><rect x="1025" y="648" width="1" height="4" fill="#6e6e6e"/><rect x="1045" y="648" width="1" height="4" fill="#6e6e6e"/><rect x="1065" y="648" width="1" height="4" fill="#6e6e6e"/><rect x="1085" y="648" width="1" height="4" fill="#6e6e6e"/><rect x="1105" y="642" width="1" height="10" fill="#6e6e6e"/><rect x="1125" y="648" width="1" height="4" fill="#6e6e6e"/><rect x="1145" y="648" width="1" height="4" fill="#6e6e6e"/><rect x="1165" y="648" width="1" height="4" fill="#6e6e6e"/><rect x="1185" y="648" width="1" height="4" fill="#6e6e6e"/><rect x="1205" y="642" width="1" height="10" fill="#6e6e6e"/><rect x="1225" y="648" width="1" height="4" fill="#6e6e6e"/><rect x="1245" y="648" width="1" height="4" fill="#6e6e6e"/><rect x="1265" y="648" width="1" height="4" fill="#6e6e6e"/><rect x="1285" y="648" width="1" height="4" fill="#6e6e6e"/><rect x="1305" y="642" width="1" height="10" fill="#6e6e6e"/><rect x="1325" y="648" width="1" height="4" fill="#6e6e6e"/><rect x="1345" y="648" width="1" height="4" fill="#6e6e6e"/><rect x="1365" y="648" width="1" height="4" fill="#6e6e6e"/>
 <rect x="1" y="654" width="103" height="231" fill="#282828"/>
 <rect x="104" y="654" width="1" height="231" fill="#1e1e1e"/>
 <rect x="1" y="712" width="1365" height="1" fill="#1f1f1f"/>
 <rect x="1" y="782" width="1365" height="1" fill="#1f1f1f"/>
 <rect x="1" y="852" width="1365" height="1" fill="#1f1f1f"/>
 <rect x="1366" y="655" width="8" height="222" fill="#242424"/>
 <rect x="1366" y="655" width="8" height="20" rx="3" fill="#474747"/>
</svg>
<div class="t" style="left:107px;top:621.7px;font-size:11px;color:#a9a9a9">00:00:00:00</div>
<div class="t" style="left:307px;top:621.7px;font-size:11px;color:#a9a9a9">00:00:02:00</div>
<div class="t" style="left:507px;top:621.7px;font-size:11px;color:#a9a9a9">00:00:04:00</div>
<div class="t" style="left:707px;top:621.7px;font-size:11px;color:#a9a9a9">00:00:06:00</div>
<div class="t" style="left:907px;top:621.7px;font-size:11px;color:#a9a9a9">00:00:08:00</div>
<div class="t" style="left:1107px;top:621.7px;font-size:11px;color:#a9a9a9">00:00:10:00</div>
<div class="t" style="left:1307px;top:621.7px;font-size:11px;color:#a9a9a9">00:00:12:00</div>

<!-- clips -->
<div class="a" style="left:105px;top:713px;width:564px;height:69px;background:#33664a"></div>
<svg style="left:105px;top:770px" width="564" height="12" viewBox="105 770 564 12">
 <path d="M105 779 H669 V781 H105 Z" fill="#3ecf86"/>
 <path d="M120 779 l2 -1 l2 1 M180 779 l3 -1.2 l3 1.2 M230 779 l3 -1 l4 1 M300 779 l3 -1.2 l5 1.2 M400 779 l4 -1.4 l4 1.4 M470 779 l6 -2.4 l8 0.6 l5 1.8 M520 779 l6 -0.8 l6 0.8 M560 779 l4 -1 l6 1 M605 779 l5 -1.2 l6 1.2" fill="#3ecf86" stroke="#3ecf86" stroke-width="0.8"/>
 <rect x="105" y="781" width="564" height="1" fill="#2a4f3a"/>
</svg>
<svg style="left:120px;top:726px" width="16" height="16" viewBox="120 726 16 16">
 <path d="M125 739.3 V729.6 L133.6 727.6 V737.3" fill="none" stroke="#f4f4f4" stroke-width="1.8"/>
 <ellipse cx="123.5" cy="739.3" rx="2.3" ry="1.9" fill="#f4f4f4"/>
 <ellipse cx="132.1" cy="737.3" rx="2.3" ry="1.9" fill="#f4f4f4"/>
</svg>
<div class="t" style="left:138.3px;top:729.5px;font-size:11.4px;color:#f0f0f0">Rec_10.55.55 20201109.mp4 (Microphone)</div>
<div class="a" style="left:105px;top:783px;width:564px;height:69px;background:#46b7db"></div>
<div class="a" style="left:105px;top:849px;width:564px;height:2px;background:#3fd9a6"></div>
<div class="a" style="left:113px;top:788px;width:98px;height:58px;background:#fff;overflow:hidden">
 <div class="a" style="left:16px;top:6.5px;width:65px;height:2px;background:#555;opacity:.5"></div>
 <div class="a" style="left:6px;top:16px;width:2.5px;height:2.5px;background:#333"></div>
 <div class="a" style="left:35px;top:16px;width:4px;height:3px;border:1px solid #333"></div>
 <div class="a" style="left:64px;top:16px;width:3px;height:3px;background:#666"></div>
 <div class="a" style="left:5px;top:21px;width:21px;height:1.5px;background:#555"></div>
 <div class="a" style="left:34px;top:21px;width:21px;height:1.5px;background:#666"></div>
 <div class="a" style="left:63px;top:21px;width:19px;height:1.5px;background:#555"></div>
 <div class="a" style="left:5px;top:25px;width:18px;height:1px;background:#999"></div>
 <div class="a" style="left:34px;top:25px;width:10px;height:1px;background:#999"></div>
 <div class="a" style="left:63px;top:25px;width:18px;height:1px;background:#999"></div>
 <div class="a" style="left:6px;top:34px;width:27px;height:16px;background:#2a2018"></div>
 <div class="a" style="left:11px;top:37px;width:16px;height:10px;background:#e8e8e8"></div>
 <div class="a" style="left:6px;top:34px;width:4px;height:16px;background:#d08a40"></div>
 <div class="a" style="left:35px;top:34px;width:27px;height:16px;background:linear-gradient(#101418 0,#101418 15%,#c060d8 25%,#2a3a7a 45%,#5a6aa0 60%,#30d0c8 80%,#101418 95%)"></div>
 <div class="a" style="left:64px;top:35px;width:26px;height:15px;background:#111"></div>
 <div class="a" style="left:64px;top:38px;width:9px;height:12px;background:#f0f0f0"></div>
 <div class="a" style="left:77px;top:39px;width:7px;height:9px;background:#ddd"></div>
 <div class="a" style="left:45px;top:53px;width:1px;height:4px;background:#444"></div>
 <div class="a" style="left:48px;top:54.5px;width:10px;height:1px;background:#b0a0d0"></div>
</div>
<svg style="left:226px;top:797px" width="18" height="14" viewBox="226 797 18 14">
 <rect x="228" y="798.7" width="13.7" height="10" rx="1.5" fill="#f8f8f8"/>
 <path d="M233.3 801.2 V806.2 L237.6 803.7 Z" fill="#46b7db"/>
</svg>
<div class="t" style="left:246.3px;top:799px;font-size:11px;color:#f6f6f6">Rec_10.55.55 20201109.mp4 (Screen)</div>
<div class="a" style="left:145px;top:853px;width:484px;height:32px;background:#33664a"></div>
<svg style="left:160px;top:866px" width="16" height="16" viewBox="160 864 16 16">
 <path d="M165 877.3 V867.6 L173.6 865.6 V875.3" fill="none" stroke="#f4f4f4" stroke-width="1.8"/>
 <ellipse cx="163.5" cy="877.3" rx="2.3" ry="1.9" fill="#f4f4f4"/>
 <ellipse cx="172.1" cy="875.3" rx="2.3" ry="1.9" fill="#f4f4f4"/>
</svg>
<div class="t" style="left:178px;top:869.5px;font-size:11.4px;color:#f0f0f0">Rec_15.01.50 20201105.mp4 (Microphone)</div>
<div class="a" style="left:105px;top:878px;width:1261px;height:7px;background:#282828"></div>
<div class="a" style="left:105px;top:878px;width:235px;height:7px;background:#3e3e3e;border-radius:3px 3px 0 0"></div>
<!-- track headers -->
<div class="t" style="left:23.5px;top:735.5px;font-size:12.3px;color:#e2e2e2">41</div>
<div class="t" style="left:23.5px;top:805.5px;font-size:12.3px;color:#e2e2e2">40</div>
<div class="t" style="left:23.5px;top:875.5px;font-size:12.3px;color:#e2e2e2">39</div>
<svg style="left:20px;top:750px" width="50" height="90" viewBox="20 750 50 90">
 <path d="M24.2 761 Q30 754.8 35.8 761 Q30 767.2 24.2 761 Z" fill="#d8d8d8"/>
 <circle cx="30" cy="761" r="2.1" fill="#282828"/><rect x="29.2" y="760.2" width="1.6" height="1.6" fill="#d8d8d8"/>
 <rect x="53" y="760.3" width="8.2" height="5.5" rx="0.8" fill="#d8d8d8"/>
 <path d="M54.8 760.5 V758 A2.3 2.3 0 0 1 59.4 758 V758.6" fill="none" stroke="#d8d8d8" stroke-width="1.3"/>
 <rect x="56.5" y="762.2" width="1.2" height="1.2" fill="#282828"/>
 <path d="M24.2 831 Q30 824.8 35.8 831 Q30 837.2 24.2 831 Z" fill="#d8d8d8"/>
 <circle cx="30" cy="831" r="2.1" fill="#282828"/><rect x="29.2" y="830.2" width="1.6" height="1.6" fill="#d8d8d8"/>
 <rect x="53" y="830.3" width="8.2" height="5.5" rx="0.8" fill="#d8d8d8"/>
 <path d="M54.8 830.5 V828 A2.3 2.3 0 0 1 59.4 828 V828.6" fill="none" stroke="#d8d8d8" stroke-width="1.3"/>
 <rect x="56.5" y="832.2" width="1.2" height="1.2" fill="#282828"/>
</svg>
<!-- playhead -->
<div class="a" style="left:168px;top:615px;width:2px;height:270px;background:#fbb829"></div>
<svg style="left:160px;top:606px" width="20" height="14" viewBox="160 606 20 14"><path d="M163 609 H175 V610.5 L169 616.8 L163 610.5 Z" fill="#fbb829"/></svg>
</body></html>
